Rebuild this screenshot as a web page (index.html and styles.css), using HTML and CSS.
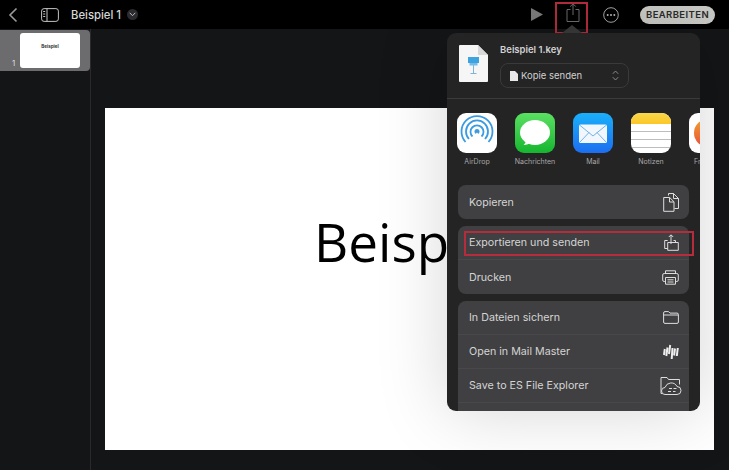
FILE: index.html
```html
<!DOCTYPE html>
<html>
<head>
<title>Beispiel 1</title>
<link rel="stylesheet" href="styles.css">
</head>
<body>
<div id="main">
<div class="nav">
<svg class="back" width="10" height="16" viewBox="0 0 10 16"><path d="M8.500 1.500 2 8l6.500 6.500" fill="none" stroke="#9a9a9a" stroke-width="1.600"/></svg>
<svg class="side-icon" width="18" height="14" viewBox="0 0 18 14"><rect x=".6" y=".6" width="16.800" height="12.800" rx="2.500" fill="none" stroke="#c4c4c4"/><path d="M6 .6v12.800" stroke="#c4c4c4"/><path d="M2.200 3.500h2M2.200 6h2M2.200 8.500h2" stroke="#c4c4c4"/></svg>
<span class="title">Beispiel 1</span>
<span class="title-more"><svg width="7" height="5" viewBox="0 0 7 5"><path d="M.7.8 3.500 3.700 6.300.8" fill="none" stroke="#bbb" stroke-width="1"/></svg></span>
<div class="nav-right">
<svg class="play" width="12" height="13" viewBox="0 0 12 13"><path d="M0 0 12 6.500 0 13z" fill="#7d7d7d"/></svg>
<svg class="share" width="14" height="19" viewBox="0 0 14 19"><path d="M4.500 6.500H1v12h12v-12H9.500M7 12V1M4.200 3.600 7 .8l2.800 2.800" fill="none" stroke="#6e6e6e" stroke-width="1"/></svg>
<svg class="more" width="16" height="16" viewBox="0 0 16 16"><circle cx="8" cy="8" r="7.300" fill="none" stroke="#aaa"/><circle cx="4.700" cy="8" r="1" fill="#bbb"/><circle cx="8" cy="8" r="1" fill="#bbb"/><circle cx="11.300" cy="8" r="1" fill="#bbb"/></svg>
<button class="edit">BEARBEITEN</button>
</div>
</div>
<div class="content">
<div class="sidebar">
<div class="thumb-row">
<span class="thumb-num">1</span>
<div class="thumb">Beispiel</div>
</div>
</div>
<div class="canvas">
<div class="slide"><div class="slide-text">Beispiel</div></div>
</div>
</div>
</div>

<div class="mark mark-share"></div>
<div class="arrow"></div>
<div class="popover">
<div class="pop-head">
<svg class="doc" width="29" height="37" viewBox="0 0 29 37"><path d="M0 1a1 1 0 0 1 1-1h18l10 10v26a1 1 0 0 1-1 1H1a1 1 0 0 1-1-1z" fill="#f6f6f6"/><path d="M19 0l10 10H19z" fill="#d8d8d8"/><rect x="9" y="12" width="11" height="6" fill="#3fa3e0"/><rect x="10.500" y="18" width="8" height="2.500" fill="#74bdea"/><path d="M14.500 20v8M11.500 28.500h6" stroke="#7fb4d8" stroke-width="1"/></svg>
<div class="pop-info">
<div class="file-name">Beispiel 1.key</div>
<div class="select">
<svg width="8" height="10" viewBox="0 0 8 10"><path d="M0 0h5l3 3v7H0z" fill="#e8e8e8"/></svg>
<span>Kopie senden</span>
<svg class="updown" width="7" height="11" viewBox="0 0 7 11"><path d="M.8 3.800 3.500 1l2.700 2.800M.8 7.200 3.500 10l2.700-2.800" fill="none" stroke="#8a8a8a"/></svg>
</div>
</div>
</div>
<div class="apps">
<div class="app">
<div class="app-icon airdrop"><svg width="40" height="40" viewBox="0 0 40 40"><g fill="none" stroke="#3b9be0" stroke-width="1.800"><path d="M8.500 29a15.500 15.500 0 1 1 23 0"/><path d="M12 26a11 11 0 1 1 16 0"/><path d="M15.500 23.500a6.500 6.500 0 1 1 9 0"/></g><circle cx="20" cy="18.500" r="2.500" fill="#3b9be0"/><path d="M20 19.500 30 31H10z" fill="#fff"/></svg></div>
<span>AirDrop</span>
</div>
<div class="app">
<div class="app-icon messages"><svg width="40" height="40" viewBox="0 0 40 40"><ellipse cx="20" cy="19.500" rx="15" ry="12.500" fill="#fff"/><path d="M11 27c0 2-1.200 4-2.500 5 3 0 6-1 8-3z" fill="#fff"/></svg></div>
<span>Nachrichten</span>
</div>
<div class="app">
<div class="app-icon mail"><svg width="40" height="40" viewBox="0 0 40 40"><rect x="6" y="11.500" width="28" height="18.500" rx="1.500" fill="#f2f7fd"/><path d="M6.500 12 20 23l13.500-11M6.500 29.500 16 19.500M33.500 29.500 24 19.500" fill="none" stroke="#62a9e6" stroke-width=".9"/></svg></div>
<span>Mail</span>
</div>
<div class="app">
<div class="app-icon notes"><div class="notes-top"></div><div class="notes-line"></div><div class="notes-line"></div><div class="notes-line"></div></div>
<span>Notizen</span>
</div>
<div class="app">
<div class="app-icon other"><svg width="40" height="40" viewBox="0 0 40 40"><defs><linearGradient id="fr" x1="0" y1="0" x2="0" y2="1"><stop offset="0" stop-color="#f0a030"/><stop offset="1" stop-color="#e8503a"/></linearGradient></defs><circle cx="19" cy="20" r="14" fill="url(#fr)"/><path d="M13 26 20 10l5 14" fill="none" stroke="#333" stroke-width="2"/></svg></div>
<span>Freeform</span>
</div>
</div>
<div class="group">
<div class="row"><span>Kopieren</span>
<svg width="16" height="20" viewBox="0 0 16 20"><path d="M5.500 3.500V1.500h5l5 5v10h-4M.7 5.500h6l4.300 4.300v9.500H.7zM6.500 5.500v4.500H11M10.500 1.500V6.500h5" fill="none" stroke="#ddd"/></svg>
</div>
</div>
<div class="group">
<div class="row"><span>Exportieren und senden</span>
<svg width="15" height="17" viewBox="0 0 15 17"><path d="M3.700 6.500H.7v8h3M7 10V1M4.800 3 7 .8 9.200 3M9.500 6.500h2v2M3.700 8.500h10.600v7.800H3.700z" fill="none" stroke="#ddd"/></svg>
</div>
<div class="row"><span>Drucken</span>
<svg width="17" height="15" viewBox="0 0 17 15"><path d="M3.500 3.500V.8h10v2.700M3.500 11.500H2.200A1.500 1.500 0 0 1 .7 10V5A1.500 1.500 0 0 1 2.200 3.500h12.600A1.500 1.500 0 0 1 16.300 5v5a1.500 1.500 0 0 1-1.500 1.500h-1.300M3.500 7.500h10v6.700h-10zM5.500 9.800h6M5.500 12h6" fill="none" stroke="#ddd"/></svg>
</div>
</div>
<div class="group">
<div class="row"><span>In Dateien sichern</span>
<svg width="16" height="13" viewBox="0 0 16 13"><path d="M.6 2A1.400 1.400 0 0 1 2 .6h3.500l1.500 1.500h7A1.400 1.400 0 0 1 15.400 3.500v7.500a1.400 1.400 0 0 1-1.400 1.400H2A1.400 1.400 0 0 1 .6 11zM.6 4h14.800" fill="none" stroke="#ddd"/></svg>
</div>
<div class="row"><span>Open in Mail Master</span>
<svg width="16" height="15" viewBox="0 0 16 15"><path d="M1.800 5 1 11M4.500 3.500 3.300 12M7.200 1 6 10M9.500 4l-.8 11M12 4.500l-.9 7M14.800 4l-1 8" stroke="#eee" stroke-width="2" fill="none"/></svg>
</div>
<div class="row"><span>Save to ES File Explorer</span>
<svg class="es" width="22" height="19" viewBox="0 0 22 19"><path d="M1 17.500V1.500h6l1.500 2H19.500v5M6 17.500H1" fill="none" stroke="#ddd"/><path d="M5 18.500a3.500 3.500 0 0 1 0-7 6.500 6.500 0 0 1 12-1 4 4 0 0 1 0 8z" fill="#404042" stroke="#ddd"/><path d="M8 15.500h3M9 12.500h3M13 15.500h2.500M13.500 12.500h3" stroke="#ddd" stroke-width="1.200"/></svg>
</div>
<div class="row"></div>
</div>
<div class="mark mark-export"></div>
</div>
</body>
</html>
```
FILE: styles.css
```css
*{
margin: 0;
padding: 0;
box-sizing: border-box;
}
html,body{
width: 729px;
height: 470px;
overflow: hidden;
background: #141517;
font-family: "Inter", "Liberation Sans", sans-serif;
}
#main{
width: 729px;
height: 470px;
display: flex;
flex-direction: column;
}
.nav{
height: 29px;
background: #000;
display: flex;
align-items: center;
padding-left: 8px;
flex-shrink: 0;
}
.side-icon{
margin-left: 23px;
}
.title{
margin-left: 12px;
color: #d6d6d6;
font-size: 11.300px;
font-weight: 500;
}
.title-more{
margin-left: 6px;
width: 11px;
height: 11px;
border-radius: 50%;
background: #2c2c30;
display: flex;
align-items: center;
justify-content: center;
}
.nav-right{
margin-left: auto;
display: flex;
align-items: center;
padding-right: 14px;
}
.share{
margin-left: 23px;
margin-top: -4px;
}
.more{
margin-left: 23px;
}
.edit{
margin-left: 21px;
width: 75px;
height: 18px;
border: 0;
border-radius: 9px;
background: #c9c9c5;
color: #2a2a2a;
font-family: "Inter", "Liberation Sans", sans-serif;
font-size: 9.500px;
font-weight: 600;
letter-spacing: .4px;
}
.content{
flex: 1;
display: flex;
}
.sidebar{
width: 91px;
border-right: 1px solid #2a2a2c;
background: #141517;
flex-shrink: 0;
}
.thumb-row{
height: 41px;
margin-top: 1px;
background: #6c6c6e;
border-radius: 0 4px 4px 0;
width: 90px;
display: flex;
padding: 3px 10px 3px 0;
}
.thumb-num{
width: 20px;
padding-left: 12px;
align-self: flex-end;
color: #ddd;
font-size: 8px;
}
.thumb{
width: 60px;
background: #fff;
border-radius: 3px;
color: #333;
font-size: 4.500px;
font-weight: 700;
text-align: center;
padding-top: 11px;
}
.canvas{
flex: 1;
padding: 79px 15px 20px 14px;
}
.slide{
width: 609px;
height: 342px;
background: #fff;
padding: 95px 0 0 209px;
}
.slide-text{
width: 133px;
color: #000;
font-family: "Open Sans", "Liberation Sans", sans-serif;
font-size: 53px;
line-height: 78px;
white-space: nowrap;
overflow: hidden;
}
.mark{
position: absolute;
border: 2px solid #b52c3c;
}
.mark-share{
left: 555px;
top: 2px;
width: 33px;
height: 32px;
}
.arrow{
position: absolute;
left: 562px;
top: 25px;
width: 0;
height: 0;
border-left: 10px solid transparent;
border-right: 10px solid transparent;
border-bottom: 8px solid #3a3a3a;
}
.popover{
position: absolute;
left: 447px;
top: 33px;
width: 253px;
height: 378px;
background: #242425;
border-radius: 9px;
overflow: hidden;
box-shadow: 0 0 70px rgba(0,0,0,.17);
}
.pop-head{
height: 66px;
border-bottom: 1px solid #3a3a3b;
display: flex;
padding: 12px 0 0 12px;
}
.doc{
flex-shrink: 0;
}
.pop-info{
margin-left: 12px;
margin-top: -1px;
}
.file-name{
color: #d2d2d2;
font-size: 9.500px;
font-weight: 600;
line-height: 12px;
}
.select{
margin-top: 7px;
width: 129px;
height: 25px;
border: 1px solid #3a3a3b;
border-radius: 8px;
display: flex;
align-items: center;
padding: 0 9px;
color: #d0d0d0;
font-size: 9.500px;
}
.select span{
margin-left: 3px;
}
.updown{
margin-left: auto;
}
.apps{
height: 86px;
display: flex;
gap: 18px;
padding: 14px 0 0 10px;
width: 253px;
overflow: hidden;
}
.app{
width: 40px;
flex-shrink: 0;
display: flex;
flex-direction: column;
align-items: center;
color: #a8a8a8;
font-size: 7px;
white-space: nowrap;
}
.app span{
margin-top: 4px;
line-height: 9px;
}
.app-icon{
width: 40px;
height: 40px;
border-radius: 9px;
overflow: hidden;
background: #fff;
}
.messages{
background: linear-gradient(#5be062,#16b52f);
}
.mail{
background: linear-gradient(#1ab0fa,#1c6ef0);
}
.notes-top{
height: 11px;
background: linear-gradient(#f8d84c,#fcc726);
}
.notes-line{
height: 8px;
border-bottom: 1px solid #bdbdbd;
}
.group{
margin: 0 11px 7px;
background: #404042;
border-radius: 8px;
}
.row{
height: 34px;
display: flex;
align-items: center;
justify-content: space-between;
padding: 0 10px 0 11px;
color: #d4d4d4;
font-size: 10.700px;
border-bottom: 1px solid #48484a;
}
.row:last-child{
border-bottom: 0;
}
.row svg{
flex-shrink: 0;
}
.row .es{
margin-right: -3px;
}
.mark-export{
left: 17px;
top: 198px;
width: 230px;
height: 25px;
}
```
